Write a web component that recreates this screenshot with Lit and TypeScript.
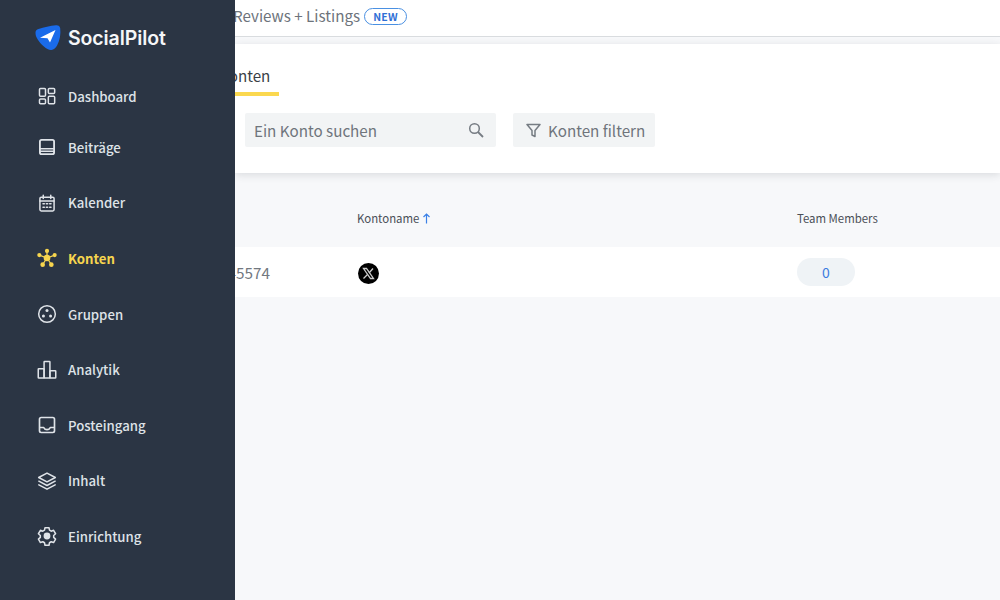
import { LitElement, html, css, svg } from "lit";
import { customElement } from "lit/decorators.js";

const icons: Record<string, unknown> = {
  dashboard: svg`<rect x="3" y="3" width="7.200" height="9.400" rx="1.200"/><rect x="13.600" y="3" width="7.600" height="6" rx="1.200"/><rect x="3" y="15.500" width="7.200" height="5.800" rx="1.200"/><rect x="13.600" y="12.200" width="7.600" height="9.100" rx="1.200"/>`,
  posts: svg`<rect x="3.500" y="3.500" width="17" height="17" rx="2" stroke-width="2.200"/><path d="M4 14.200h16M4 17.200h16" stroke-width="1.800"/>`,
  calendar: svg`<rect x="3.500" y="5" width="17" height="16.500" rx="1.600"/><path d="M3.500 9.500h17M7.500 2.600v4M16.500 2.600v4"/><path d="M7.200 13h1.600M11.200 13h1.600M15.200 13h1.600M7.200 17h1.600M11.200 17h1.600M15.200 17h1.600" stroke-width="1.800"/>`,
  groups: svg`<circle cx="12" cy="12" r="10"/><circle cx="12" cy="7.800" r="1.800" fill="currentColor" stroke="none"/><circle cx="7.700" cy="14.400" r="1.800" fill="currentColor" stroke="none"/><circle cx="16.300" cy="14.400" r="1.800" fill="currentColor" stroke="none"/>`,
  analytics: svg`<rect x="1.500" y="10.500" width="7" height="11" rx=".6"/><rect x="8.500" y="1.800" width="7" height="19.700" rx=".6"/><rect x="15.500" y="13" width="7" height="8.500" rx=".6"/>`,
  inbox: svg`<rect x="3" y="3" width="18" height="18" rx="2" stroke-width="2"/><path d="M3.500 15h4.500c1 2.400 2.300 2.600 4 2.600s3-.2 4-2.600h4.500" stroke-width="2"/>`,
  content: svg`<path d="M12 2.500l10 5.300-10 5.300L2 7.800z"/><path d="M2.200 12.200l9.800 5.200 9.800-5.200M2.200 16.600l9.800 5.200 9.800-5.200"/>`,
  settings: svg`<path d="M9.600 2h4.800l.6 3 2 1.200 2.900-1 2.400 4.100-2.300 2.100v2.300l2.300 2.100-2.400 4.100-2.900-1-2 1.200-.6 3H9.600l-.6-3-2-1.200-2.900 1-2.400-4.100 2.300-2.100v-2.300L1.700 9.300l2.400-4.100 2.900 1 2-1.200z"/><circle cx="12" cy="12" r="3.200" fill="currentColor"/>`,
};

const accounts = svg`<path d="M12 12V4M12 12L3.500 8.800M12 12l8.500-3.200M12 12l-5 7.500M12 12l5 7.500" stroke-width="1.500"/><circle cx="12" cy="12" r="4" fill="currentColor" stroke="none"/><circle cx="12" cy="3.500" r="2.500" fill="currentColor" stroke="none"/><circle cx="2.800" cy="8.500" r="2.500" fill="currentColor" stroke="none"/><circle cx="21.200" cy="8.500" r="2.500" fill="currentColor" stroke="none"/><circle cx="6.800" cy="20" r="2.800" fill="currentColor" stroke="none"/><circle cx="17.200" cy="20" r="2.800" fill="currentColor" stroke="none"/>`;

const nav = [
  { label: "Dashboard", icon: icons.dashboard, first: true },
  { label: "Beiträge", icon: icons.posts },
  { label: "Kalender", icon: icons.calendar },
  { label: "Konten", icon: accounts, active: true },
  { label: "Gruppen", icon: icons.groups },
  { label: "Analytik", icon: icons.analytics },
  { label: "Posteingang", icon: icons.inbox },
  { label: "Inhalt", icon: icons.content },
  { label: "Einrichtung", icon: icons.settings },
];

@customElement("app-root")
export class AppRoot extends LitElement {
  static styles = css`
    :host {
      display: flex;
      width: 1000px;
      height: 600px;
      overflow: hidden;
      background: #f7f8fa;
      font-family: "Noto Sans CJK SC", "Noto Sans", sans-serif;
      color: #5f6670;
    }
    .side {
      width: 235px;
      flex: none;
      background: #2b3544;
      display: flex;
      flex-direction: column;
      padding: 24px 0 0 35px;
      box-sizing: border-box;
      color: #dfe3e8;
      position: relative;
      z-index: 2;
    }
    .logo {
      display: flex;
      align-items: center;
      gap: 7px;
      height: 27px;
      margin-bottom: 12.900px;
      color: #f5f6f8;
      font-family: "Inter", sans-serif;
      font-weight: 600;
      font-size: 19.500px;
      letter-spacing: -0.1px;
    }
    .logo svg { display: block; flex: none; }
    .items { display: flex; flex-direction: column; }
    .item {
      height: 55.600px;
      box-sizing: border-box;
      display: flex;
      align-items: center;
      gap: 11px;
      font-size: 13.200px;
      font-weight: 500;
      padding-left: 2px;
    }
    .item.first { padding-top: 9.500px; }
    .item.active { color: #f7d54e; font-weight: 700; }
    .item svg {
      width: 20px;
      height: 20px;
      flex: none;
      fill: none;
      stroke: currentColor;
      stroke-width: 1.800;
      stroke-linejoin: round;
      stroke-linecap: round;
    }
    .main { flex: 1; min-width: 0; display: flex; flex-direction: column; overflow: hidden; }
    .top {
      height: 36px;
      background: #fff;
      border-bottom: 1px solid #d9dcdf;
      display: flex;
      align-items: center;
      flex: none;
    }
    .top .link { font-size: 15.200px; color: #6d737b; margin-left: -2px; line-height: 30px; position: relative; top: -3px; }
    .badge {
      margin-left: 4px;
      width: 43px;
      height: 17px;
      box-sizing: border-box;
      border: 1px solid #4a90e2;
      border-radius: 9px;
      color: #2f6fd6;
      font-size: 10.500px;
      font-weight: 700;
      display: flex;
      align-items: center;
      justify-content: center;
      letter-spacing: 0.3px;
      position: relative;
      top: -2px;
    }
    .card {
      margin-top: 7px;
      height: 129px;
      flex: none;
      background: #fff;
      box-shadow: 0 2px 8px rgba(40, 50, 60, 0.14);
    }
    .tabs { height: 52px; display: flex; }
    .tab {
      margin-left: -16px;
      width: 60px;
      box-sizing: border-box;
      padding: 18px 0 0 0;
      height: 52px;
      font-size: 15.200px;
      color: #3a3f46;
      line-height: 26px;
      border-bottom: 4px solid #fbd84f;
      white-space: nowrap;
    }
    .tools { display: flex; gap: 17px; padding: 17px 0 0 10px; }
    .search, .filter {
      height: 34px;
      background: #f2f4f5;
      border-radius: 2px;
      display: flex;
      align-items: center;
      font-size: 15.200px;
      color: #6f757c;
      box-sizing: border-box;
    }
    .search { width: 251px; justify-content: space-between; padding: 0 11px 0 9px; }
    .filter { width: 142px; padding-left: 13px; gap: 7px; }
    .search svg, .filter svg { display: block; fill: none; stroke: #767c83; stroke-width: 1.500; }
    .thead { height: 74px; flex: none; display: flex; align-items: flex-end; padding-bottom: 21px; box-sizing: border-box; font-size: 11.400px; color: #4a4f57; }
    .row { height: 50px; flex: none; background: #fff; display: flex; align-items: center; font-size: 15.300px; color: #72787f; }
    .c0 { width: 122px; flex: none; box-sizing: border-box; }
    .row .c0 { padding-right: 87px; white-space: nowrap; display: flex; justify-content: flex-end; }
    .c2 { width: 440px; flex: none; display: flex; align-items: center; gap: 3px; }
    .arrow { display: block; fill: none; stroke: #3b80e6; stroke-width: 1.200; }
    .pill {
      width: 58px;
      height: 28px;
      border-radius: 14px;
      background: #eff3f6;
      color: #3d7ce0;
      font-size: 14px;
      display: flex;
      align-items: center;
      justify-content: center;
    }
    .x { display: block; margin: 2px 0 0 1px; }
  `;

  render() {
    return html`
      <aside class="side">
        <div class="logo">
          <svg width="26" height="26" viewBox="0 0 26 26">
            <path d="M.5 7.500C.6 5.500 1.600 4.800 3.500 4 9 2.200 15 .9 21 .3c2.500-.2 3.800 1 4.200 3 .7 5.500-.3 12-3 17-1.300 2.500-3.400 4.400-5.800 4.600-2.400.2-5-1.200-7.500-3.400C3.500 16.600.3 12 .5 7.500z" fill="#1a6bea"/>
            <path d="M5 12.700L20.500 5 15 17.500 12.500 13.200z" fill="#fff"/>
          </svg>
          <span>SocialPilot</span>
        </div>
        <div class="items">
          ${nav.map(
            (n) => html`<div class="item ${n.active ? "active" : ""} ${n.first ? "first" : ""}">
              <svg viewBox="0 0 24 24">${n.icon}</svg><span>${n.label}</span>
            </div>`
          )}
        </div>
      </aside>
      <main class="main">
        <div class="top">
          <span class="link">Reviews + Listings</span><span class="badge">NEW</span>
        </div>
        <section class="card">
          <div class="tabs"><div class="tab">Konten</div></div>
          <div class="tools">
            <div class="search">
              <span>Ein Konto suchen</span>
              <svg width="18" height="18" viewBox="0 0 18 18"><circle cx="7.500" cy="7.500" r="4.800"/><path d="M11 11l5 5" stroke-width="1.800"/></svg>
            </div>
            <div class="filter">
              <svg width="15" height="15" viewBox="0 0 15 15"><path d="M1 1.500h13L9 7.500v6l-3-1.500V7.500z" stroke-linejoin="round"/></svg>
              <span>Konten filtern</span>
            </div>
          </div>
        </section>
        <div class="thead">
          <div class="c0"></div>
          <div class="c2">Kontoname
            <svg class="arrow" width="9" height="11" viewBox="0 0 9 11"><path d="M4.500 10.500V1M1.500 4L4.500 1l3 3"/></svg>
          </div>
          <div>Team Members</div>
        </div>
        <div class="row">
          <div class="c0"><span>45574</span></div>
          <div class="c2">
            <svg class="x" width="21" height="21" viewBox="0 0 21 21"><circle cx="10.500" cy="10.500" r="10.500" fill="#000"/><path d="M5.500 5.500h3l7 10h-3z" fill="none" stroke="#ccc" stroke-width="1.300"/><path d="M15 5.500l-4 4.500M9.500 11.500l-4 4" fill="none" stroke="#ccc" stroke-width="1.300"/></svg>
          </div>
          <div class="pill">0</div>
        </div>
      </main>
    `;
  }
}
